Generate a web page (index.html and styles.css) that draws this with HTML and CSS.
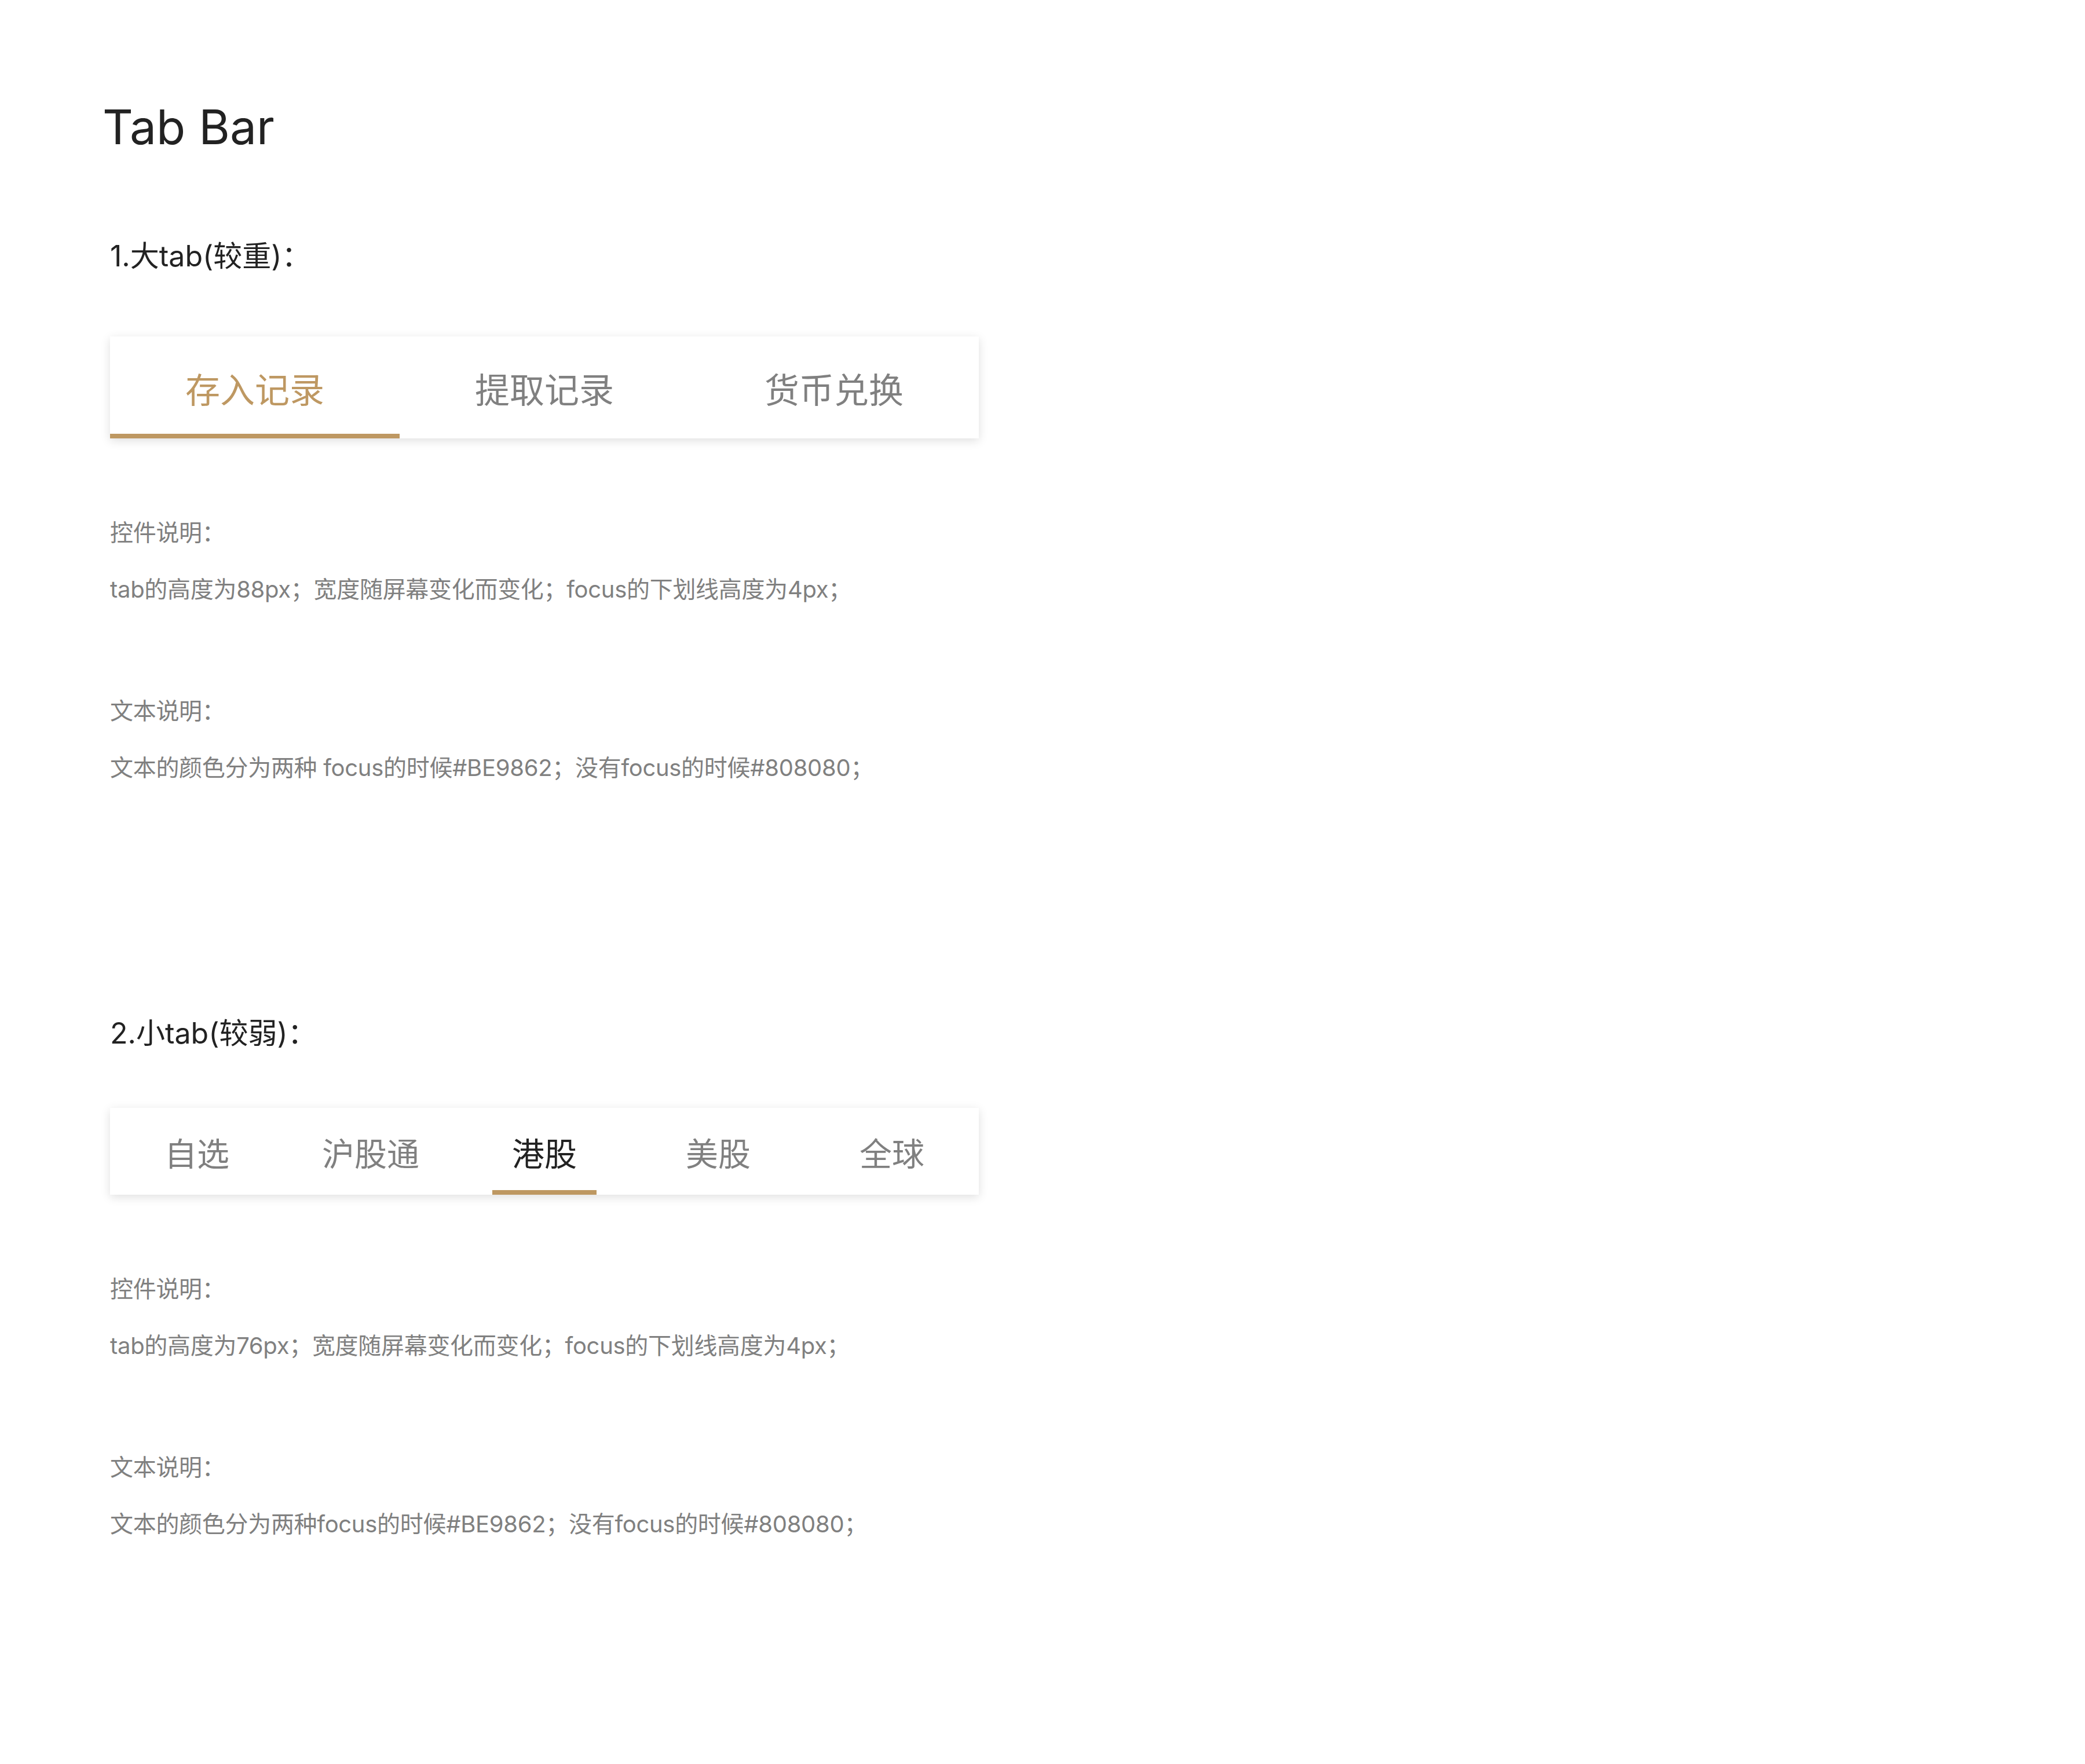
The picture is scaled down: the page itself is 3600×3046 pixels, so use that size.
FILE: index.html
```html
<!DOCTYPE html>
<html lang="zh-CN">
<head>
<meta charset="utf-8">
<title>Tab Bar</title>
<link rel="stylesheet" href="styles.css">
</head>
<body>
<main class="page">
  <h1 class="title">Tab Bar</h1>

  <section class="section section-big">
    <h2 class="section-title">1.大tab(较重)：</h2>
    <div class="tabbar tabbar-big">
      <div class="tab tab-active">存入记录</div>
      <div class="tab">提取记录</div>
      <div class="tab">货币兑换</div>
    </div>
    <div class="notes">
      <p class="note-label">控件说明：</p>
      <p class="note-text">tab的高度为88px；宽度随屏幕变化而变化；focus的下划线高度为4px；</p>
      <p class="note-label note-gap">文本说明：</p>
      <p class="note-text">文本的颜色分为两种 focus的时候#BE9862；没有focus的时候#808080；</p>
    </div>
  </section>

  <section class="section section-small">
    <h2 class="section-title">2.小tab(较弱)：</h2>
    <div class="tabbar tabbar-small">
      <div class="tab">自选</div>
      <div class="tab">沪股通</div>
      <div class="tab tab-active">港股</div>
      <div class="tab">美股</div>
      <div class="tab">全球</div>
    </div>
    <div class="notes">
      <p class="note-label">控件说明：</p>
      <p class="note-text">tab的高度为76px；宽度随屏幕变化而变化；focus的下划线高度为4px；</p>
      <p class="note-label note-gap">文本说明：</p>
      <p class="note-text">文本的颜色分为两种focus的时候#BE9862；没有focus的时候#808080；</p>
    </div>
  </section>
</main>
</body>
</html>
```
FILE: styles.css
```css
* {
  box-sizing: border-box;
}

html, body {
  margin: 0;
  padding: 0;
  background: #ffffff;
}

body {
  font-family: Inter, "Noto Sans CJK SC", sans-serif;
  color: #222222;
}

.page {
  padding: 170px 0 200px 190px;
  width: 1700px;
}

.title {
  margin: 0 0 0 -13px;
  font-size: 82px;
  line-height: 100px;
  height: 100px;
  font-weight: 400;
  color: #222222;
  letter-spacing: 0;
}

.section-title {
  margin: 0;
  font-family: Inter, "Noto Sans CJK SC", sans-serif;
  font-size: 50px;
  line-height: 60px;
  height: 60px;
  font-weight: 400;
  color: #222222;
}

.section-big {
  margin-top: 142px;
}

.section-big .tabbar-big {
  margin-top: 109px;
}

.section-small {
  margin-top: 400px;
}

.tabbar {
  display: flex;
  width: 1500px;
  background: #ffffff;
  box-shadow: 0 4px 16px rgba(0, 0, 0, 0.13);
  font-family: "Noto Sans CJK SC", sans-serif;
}

.tabbar-big {
  height: 176px;
}

.tabbar-small {
  margin-top: 99px;
  height: 150px;
}

.tab {
  position: relative;
  flex: 1 1 0;
  display: flex;
  align-items: center;
  justify-content: center;
  color: #808080;
  font-weight: 400;
}

.tabbar-big .tab {
  font-size: 60px;
}

.tabbar-small .tab {
  font-size: 56px;
}

.tabbar-big .tab-active {
  color: #BE9862;
}

.tabbar-small .tab-active {
  color: #222222;
}

.tab-active::after {
  content: "";
  position: absolute;
  bottom: 0;
  height: 8px;
  background: #BE9862;
}

.tabbar-big .tab-active::after {
  left: 0;
  right: 0;
}

.tabbar-small .tab-active::after {
  left: 60px;
  right: 60px;
}

.notes {
  margin-top: 135px;
  font-family: Inter, "Noto Sans CJK SC", sans-serif;
  color: #808080;
}

.tabbar-small + .notes {
  margin-top: 135px;
}

.notes p {
  margin: 0;
  font-size: 40px;
  line-height: 56px;
  height: 56px;
  white-space: nowrap;
  letter-spacing: -0.3px;
}

.note-text {
  margin-top: 42px !important;
}

.note-gap {
  margin-top: 154px !important;
}
```
